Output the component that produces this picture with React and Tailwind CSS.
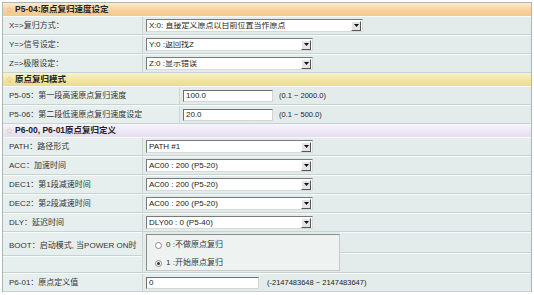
const font = "font-['Liberation_Sans','Noto_Sans_CJK_SC',sans-serif]"

const headerTones = {
  orange: 'bg-linear-to-b from-[#fcebd2] via-[#f7d3a0] to-[#f3c88c]',
  yellow: 'bg-linear-to-b from-[#f9f3cc] via-[#f1e6a2] to-[#ebdd8c]',
  violet: 'bg-linear-to-b from-[#f7f4fb] via-[#eee9f6] to-[#e4ddef]',
}

function Header({ title, tone }) {
  return (
    <div className={`flex h-[13px] items-center gap-[2px] pl-[3px] ${headerTones[tone]}`}>
      <span className="text-[7px] leading-none text-[#d6b07c]">☆</span>
      <span className="text-[8.5px] font-bold leading-none text-[#222]">{title}</span>
    </div>
  )
}

function Row({ label, labelW = 'w-[140px]', children, h = 'h-[19px]' }) {
  return (
    <div className={`flex ${h} border-t border-b border-t-[#f7fbfa] border-b-[#c5d4d2] bg-[#e3ecea]`}>
      <div className={`${labelW} flex shrink-0 items-center border-r border-[#c9d7d5] bg-[#e7efee] pl-[6px] text-[8px] text-[#333]`}>
        {label}
      </div>
      <div className="flex flex-1 items-center pl-[3px] text-[8px] text-[#222]">{children}</div>
    </div>
  )
}

function Select({ value, w = 'w-[167px]' }) {
  return (
    <div className={`${w} flex h-[13px] items-center border border-t-[#7a7a7a] border-l-[#7a7a7a] border-r-[#d8d8d8] border-b-[#d8d8d8] bg-white`}>
      <span className="flex-1 truncate pl-[2px] leading-none">{value}</span>
      <span className="mr-[1px] flex h-[10px] w-[10px] items-center justify-center border border-t-white border-l-white border-r-[#555] border-b-[#555] bg-[#e4e4e4]">
        <svg width="5" height="3" viewBox="0 0 5 3">
          <path d="M0 0h5L2.5 3z" fill="#111" />
        </svg>
      </span>
    </div>
  )
}

function Input({ value, w }) {
  return (
    <div className={`${w} flex h-[12px] items-center border border-t-[#6f6f6f] border-l-[#6f6f6f] border-r-[#d4d4d4] border-b-[#d4d4d4] bg-white pl-[2px] leading-none`}>
      {value}
    </div>
  )
}

function Radio({ checked, label }) {
  return (
    <div className="flex items-center gap-[4px] text-[8px] text-[#333]">
      <span className="flex h-[7px] w-[7px] items-center justify-center rounded-full border border-[#8a8a8a] bg-white">
        {checked && <span className="h-[3px] w-[3px] rounded-full bg-[#333]" />}
      </span>
      <span>{label}</span>
    </div>
  )
}

export default function App() {
  return (
    <div className={`h-[295px] w-[534px] bg-white p-[2px] ${font}`}>
      <div className="border-t border-l border-r border-[#aab8b6]">
        <Header title="P5-04:原点复归速度设定" tone="orange" />
        <Row label="X=>复归方式：">
          <Select value="X:0: 直接定义原点以目前位置当作原点" w="w-[217px]" />
        </Row>
        <Row label="Y=>信号设定：">
          <Select value="Y:0 :返回找Z" />
        </Row>
        <Row label="Z=>极限设定：">
          <Select value="Z:0 :显示错误" />
        </Row>

        <Header title="原点复归模式" tone="yellow" />
        <Row label="P5-05：第一段高速原点复归速度" labelW="w-[177px]">
          <Input value="100.0" w="w-[90px]" />
          <span className="ml-[6px] text-[7.5px]">(0.1 ~ 2000.0)</span>
        </Row>
        <Row label="P5-06：第二段低速原点复归速度设定" labelW="w-[177px]">
          <Input value="20.0" w="w-[90px]" />
          <span className="ml-[6px] text-[7.5px]">(0.1 ~ 500.0)</span>
        </Row>

        <Header title="P6-00, P6-01原点复归定义" tone="violet" />
        <Row label="PATH：路径形式">
          <Select value="PATH #1" />
        </Row>
        <Row label="ACC：加速时间">
          <Select value="AC00 : 200 (P5-20)" />
        </Row>
        <Row label="DEC1：第1段减速时间">
          <Select value="AC00 : 200 (P5-20)" />
        </Row>
        <Row label="DEC2：第2段减速时间">
          <Select value="AC00 : 200 (P5-20)" />
        </Row>
        <Row label="DLY：延迟时间">
          <Select value="DLY00 : 0 (P5-40)" />
        </Row>

        <div className="flex h-[41px] bg-[#e3ecea]">
          <div className="flex w-[140px] shrink-0 flex-col border-r border-[#c9d7d5]">
            <div className="flex flex-1 items-start border-t border-b border-t-[#f7fbfa] border-b-[#c5d4d2] bg-[#e7efee] pl-[6px] pt-[7px] text-[8px] text-[#333]">
              BOOT：启动模式, 当POWER ON时
            </div>
            <div className="flex-1 border-t border-b border-t-[#f7fbfa] border-b-[#c5d4d2] bg-[#e7efee]" />
          </div>
          <div className="flex items-center border-b border-b-[#c5d4d2] py-[2px] pl-[3px]">
            <div className="flex h-[37px] w-[194px] flex-col justify-center gap-[6px] border border-t-[#8c8c8c] border-l-[#8c8c8c] border-r-[#c9c9c9] border-b-[#c9c9c9] bg-[#eef3f2] pl-[8px] pt-[4px]">
              <Radio label="0 :不做原点复归" />
              <Radio checked label="1 :开始原点复归" />
            </div>
          </div>
          <div className="flex flex-1 flex-col">
            <div className="flex-1 border-t border-b border-t-[#f7fbfa] border-b-[#c5d4d2]" />
            <div className="flex-1 border-t border-b border-t-[#f7fbfa] border-b-[#c5d4d2]" />
          </div>
        </div>

        <Row label="P6-01：原点定义值">
          <Input value="0" w="w-[113px]" />
          <span className="ml-[8px] text-[7.5px]">(-2147483648 ~ 2147483647)</span>
        </Row>
      </div>
    </div>
  )
}
